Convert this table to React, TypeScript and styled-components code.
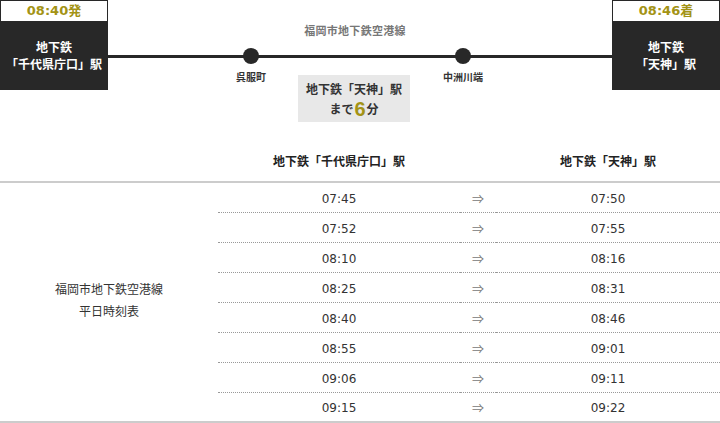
import React from "react";
import styled, { createGlobalStyle } from "styled-components";

const Global = createGlobalStyle`
  html, body { margin: 0; padding: 0; background: #fff; }
  body { font-family: "Noto Sans CJK JP", "Noto Sans", sans-serif; color: #333; }
  * { box-sizing: border-box; }
`;

const GOLD = "#a39315";
const DARK = "#282828";

const Page = styled.div`
  width: 720px;
`;

const Route = styled.div`
  display: flex;
  align-items: flex-start;
  height: 122px;
`;

const EndBox = styled.div`
  width: 108px;
  height: 90px;
  display: flex;
  flex-direction: column;
  flex: none;
`;

const TimeLabel = styled.div`
  height: 21px;
  border: 1px solid ${DARK};
  border-bottom: none;
  background: #fff;
  color: ${GOLD};
  font-weight: bold;
  font-size: 13px;
  line-height: 20px;
  text-align: center;
  font-family: "DejaVu Sans", "Noto Sans CJK JP", sans-serif;
`;

const StationName = styled.div`
  flex: 1;
  background: ${DARK};
  color: #fff;
  font-weight: bold;
  font-size: 12px;
  line-height: 17px;
  display: flex;
  align-items: center;
  justify-content: center;
  text-align: center;
  padding-bottom: 1px;
`;

const Middle = styled.div`
  flex: 1;
  display: flex;
  flex-direction: column;
`;

const LineTitle = styled.div`
  margin-top: 23px;
  height: 14px;
  line-height: 14px;
  font-size: 11px;
  font-weight: bold;
  color: #777;
  text-align: center;
  padding-right: 10px;
  letter-spacing: 0.3px;
`;

const Track = styled.div`
  position: relative;
  margin-top: 11px;
  display: flex;
  align-items: flex-start;
  padding-left: 113px;
  &::before {
    content: "";
    position: absolute;
    left: 0;
    right: 0;
    top: 7px;
    height: 3px;
    background: ${DARK};
  }
`;

const Stop = styled.div<{ $gap?: number }>`
  position: relative;
  width: 60px;
  margin-left: ${(p) => p.$gap ?? 0}px;
  display: flex;
  flex-direction: column;
  align-items: center;
`;

const Dot = styled.div`
  width: 16px;
  height: 16px;
  border-radius: 50%;
  background: ${DARK};
`;

const StopLabel = styled.div`
  margin-top: 6px;
  font-size: 10px;
  font-weight: bold;
  line-height: 14px;
  color: #333;
  white-space: nowrap;
`;

const Duration = styled.div`
  position: relative;
  margin-left: 17px;
  margin-top: 27px;
  width: 112px;
  height: 47px;
  background: #e8e8e8;
  font-size: 12px;
  font-weight: bold;
  color: #333;
  text-align: center;
  display: flex;
  flex-direction: column;
  justify-content: center;
  gap: 3px;
  line-height: 17px;
`;

const DurationLine = styled.div`
  height: 17px;
  display: flex;
  align-items: center;
  justify-content: center;
`;

const Big = styled.span`
  color: ${GOLD};
  font-size: 20px;
  line-height: 16px;
  font-family: "Liberation Sans", Arial, sans-serif;
  font-weight: bold;
  margin: 0 1px;
`;

const Table = styled.table`
  margin-top: 21px;
  width: 720px;
  border-collapse: separate;
  border-spacing: 0;
  table-layout: fixed;
`;

const Th = styled.th`
  height: 40px;
  padding: 0 0 3px;
  font-size: 12px;
  font-weight: bold;
  color: #222;
  text-align: center;
  border-bottom: 2px solid #ccc;
`;

const Cell = styled.td<{ $last?: boolean }>`
  height: 30px;
  padding: ${(p) => (p.$last ? "1px 0 0" : "2px 0 0")};
  text-align: center;
  font-size: 12px;
  color: #333;
  font-family: "DejaVu Sans", "Noto Sans", sans-serif;
  border-bottom: ${(p) => (p.$last ? "2px solid #ccc" : "1px dotted #999")};
`;

const Arrow = styled(Cell)`
  color: #777;
  font-family: "Noto Sans CJK JP", sans-serif;
`;

const LineCell = styled.td`
  padding: 0 0 4px;
  text-align: center;
  font-size: 12px;
  line-height: 22px;
  color: #333;
  vertical-align: middle;
  border-bottom: 2px solid #ccc;
`;

const rows: [string, string][] = [
  ["07:45", "07:50"],
  ["07:52", "07:55"],
  ["08:10", "08:16"],
  ["08:25", "08:31"],
  ["08:40", "08:46"],
  ["08:55", "09:01"],
  ["09:06", "09:11"],
  ["09:15", "09:22"],
];

export default function App() {
  return (
    <Page>
      <Global />
      <Route>
        <EndBox>
          <TimeLabel>08:40発</TimeLabel>
          <StationName>
            地下鉄
            <br />
            「千代県庁口」駅
          </StationName>
        </EndBox>
        <Middle>
          <LineTitle>福岡市地下鉄空港線</LineTitle>
          <Track>
            <Stop>
              <Dot />
              <StopLabel>呉服町</StopLabel>
            </Stop>
            <Duration>
              <DurationLine>地下鉄「天神」駅</DurationLine>
              <DurationLine>
                まで<Big>6</Big>分
              </DurationLine>
            </Duration>
            <Stop $gap={23}>
              <Dot />
              <StopLabel>中洲川端</StopLabel>
            </Stop>
          </Track>
        </Middle>
        <EndBox>
          <TimeLabel>08:46着</TimeLabel>
          <StationName>
            地下鉄
            <br />
            「天神」駅
          </StationName>
        </EndBox>
      </Route>
      <Table>
        <colgroup>
          <col style={{ width: 218 }} />
          <col style={{ width: 242 }} />
          <col style={{ width: 36 }} />
          <col style={{ width: 224 }} />
        </colgroup>
        <thead>
          <tr>
            <Th />
            <Th>地下鉄「千代県庁口」駅</Th>
            <Th />
            <Th>地下鉄「天神」駅</Th>
          </tr>
        </thead>
        <tbody>
          {rows.map(([d, a], i) => {
            const last = i === rows.length - 1;
            return (
              <tr key={d}>
                {i === 0 && (
                  <LineCell rowSpan={rows.length}>
                    福岡市地下鉄空港線
                    <br />
                    平日時刻表
                  </LineCell>
                )}
                <Cell $last={last}>{d}</Cell>
                <Arrow $last={last}>⇒</Arrow>
                <Cell $last={last}>{a}</Cell>
              </tr>
            );
          })}
        </tbody>
      </Table>
    </Page>
  );
}
